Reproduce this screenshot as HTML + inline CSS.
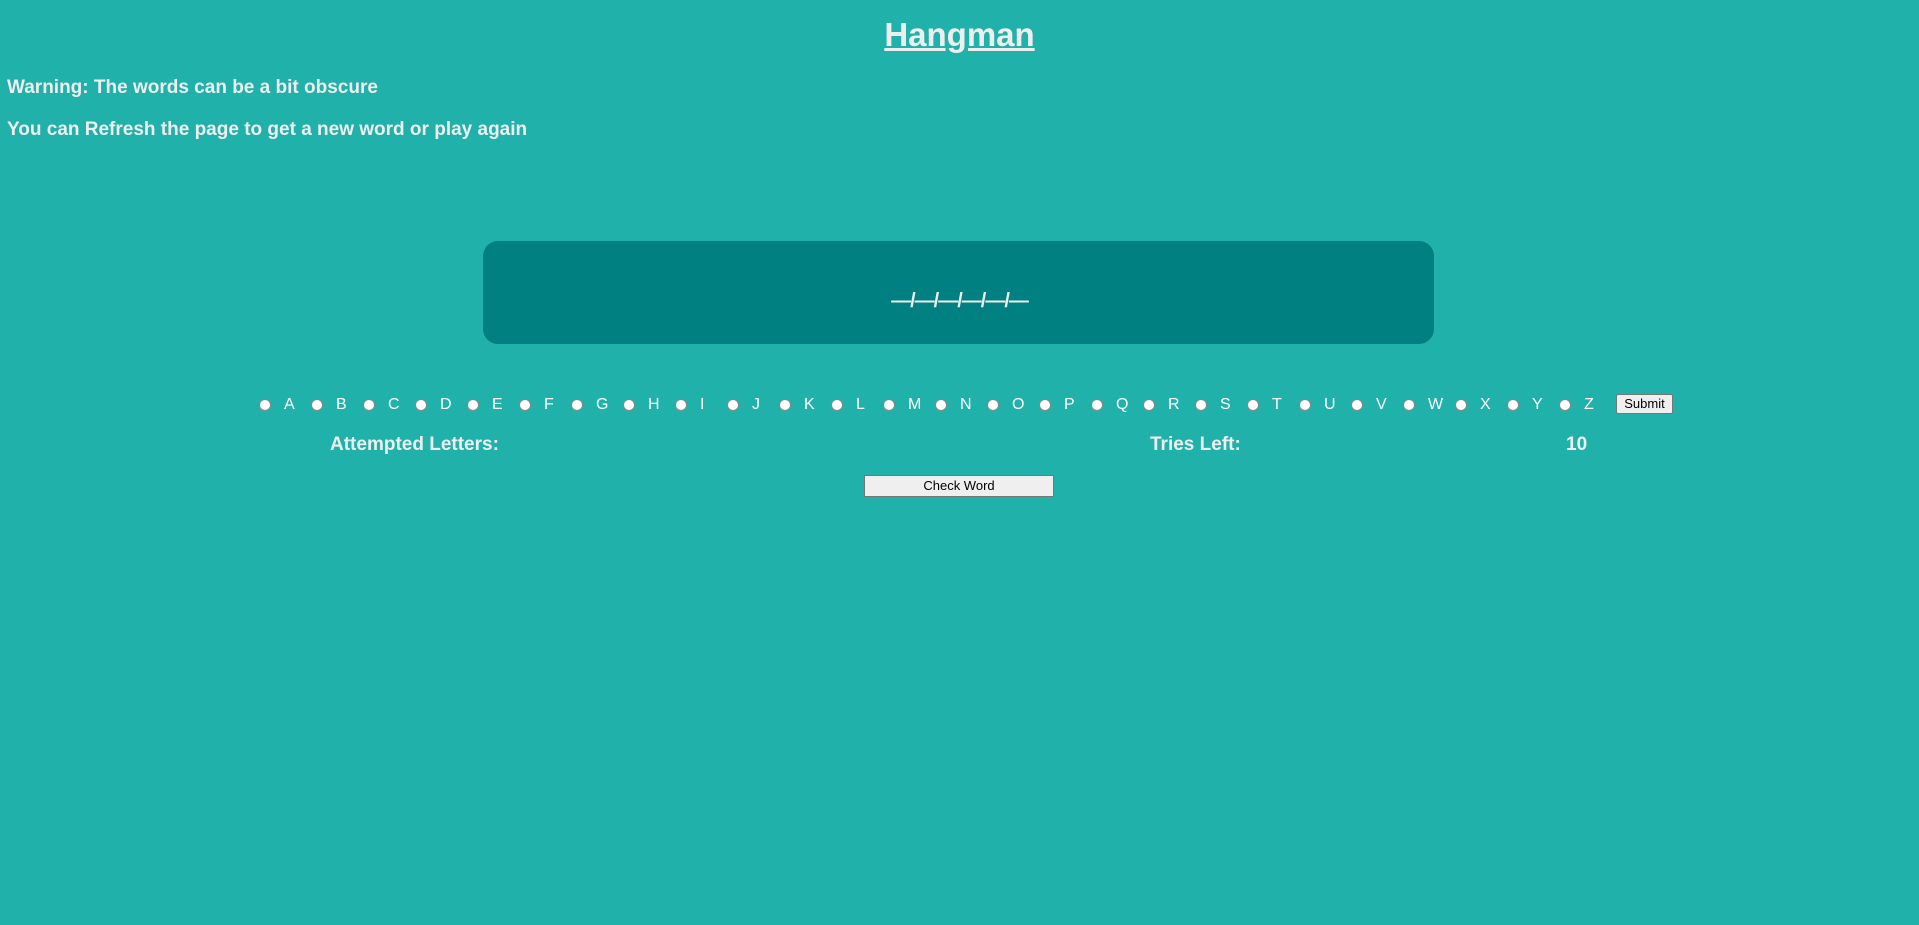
<!DOCTYPE html>
<html><head><meta charset="utf-8"><style>
body{margin:0;background:#20b2aa;font-family:"Liberation Sans",Arial,sans-serif;color:#eeeeee;width:1919px;height:925px;overflow:hidden;position:relative}
h1{position:absolute;top:16px;left:0;width:1919px;text-align:center;margin:0;font-size:33px;text-decoration:underline;font-weight:bold}
.p{position:absolute;left:7px;font-weight:bold;font-size:19px;margin:0}
.box{position:absolute;left:483px;top:241px;width:951px;height:103px;background:#008080;border-radius:15px}
.dash{position:absolute;left:0;width:100%;top:290px;text-align:center;font-weight:bold;font-size:20px;color:#eee;letter-spacing:-1px}
.row{position:absolute;top:395px;left:259px;height:20px;display:flex;align-items:center}
.pair{width:52px;display:flex;align-items:center;font-size:16px;color:#fff}
.pair i{display:inline-block;width:12px;height:12px;border-radius:50%;background:#fff;border:1px solid #888;box-sizing:border-box;margin-right:13px}
.sub{position:absolute;left:1616px;top:394px;width:57px;height:20px;background:#efefef;border:1px solid #767676;border-radius:2px;box-sizing:border-box;color:#000;font-size:13px;text-align:center;line-height:18px}
.lab{position:absolute;top:434px;font-weight:bold;font-size:19px}
.chk{position:absolute;left:864px;top:475px;width:190px;height:22px;background:#efefef;border:1px solid #767676;box-sizing:border-box;color:#000;font-size:13px;text-align:center;line-height:20px}
</style></head><body>
<h1>Hangman</h1>
<p class="p" style="top:77px">Warning: The words can be a bit obscure</p>
<p class="p" style="top:119px">You can Refresh the page to get a new word or play again</p>
<div class="box"></div>
<div class="dash">—/—/—/—/—/—</div>
<div class="row">
<span class="pair"><i></i>A</span><span class="pair"><i></i>B</span><span class="pair"><i></i>C</span><span class="pair"><i></i>D</span><span class="pair"><i></i>E</span><span class="pair"><i></i>F</span><span class="pair"><i></i>G</span><span class="pair"><i></i>H</span><span class="pair"><i></i>I</span><span class="pair"><i></i>J</span><span class="pair"><i></i>K</span><span class="pair"><i></i>L</span><span class="pair"><i></i>M</span><span class="pair"><i></i>N</span><span class="pair"><i></i>O</span><span class="pair"><i></i>P</span><span class="pair"><i></i>Q</span><span class="pair"><i></i>R</span><span class="pair"><i></i>S</span><span class="pair"><i></i>T</span><span class="pair"><i></i>U</span><span class="pair"><i></i>V</span><span class="pair"><i></i>W</span><span class="pair"><i></i>X</span><span class="pair"><i></i>Y</span><span class="pair"><i></i>Z</span>
</div>
<div class="sub">Submit</div>
<div class="lab" style="left:330px">Attempted Letters:</div>
<div class="lab" style="left:1150px">Tries Left:</div>
<div class="lab" style="left:1566px">10</div>
<div class="chk">Check Word</div>
</body></html>
